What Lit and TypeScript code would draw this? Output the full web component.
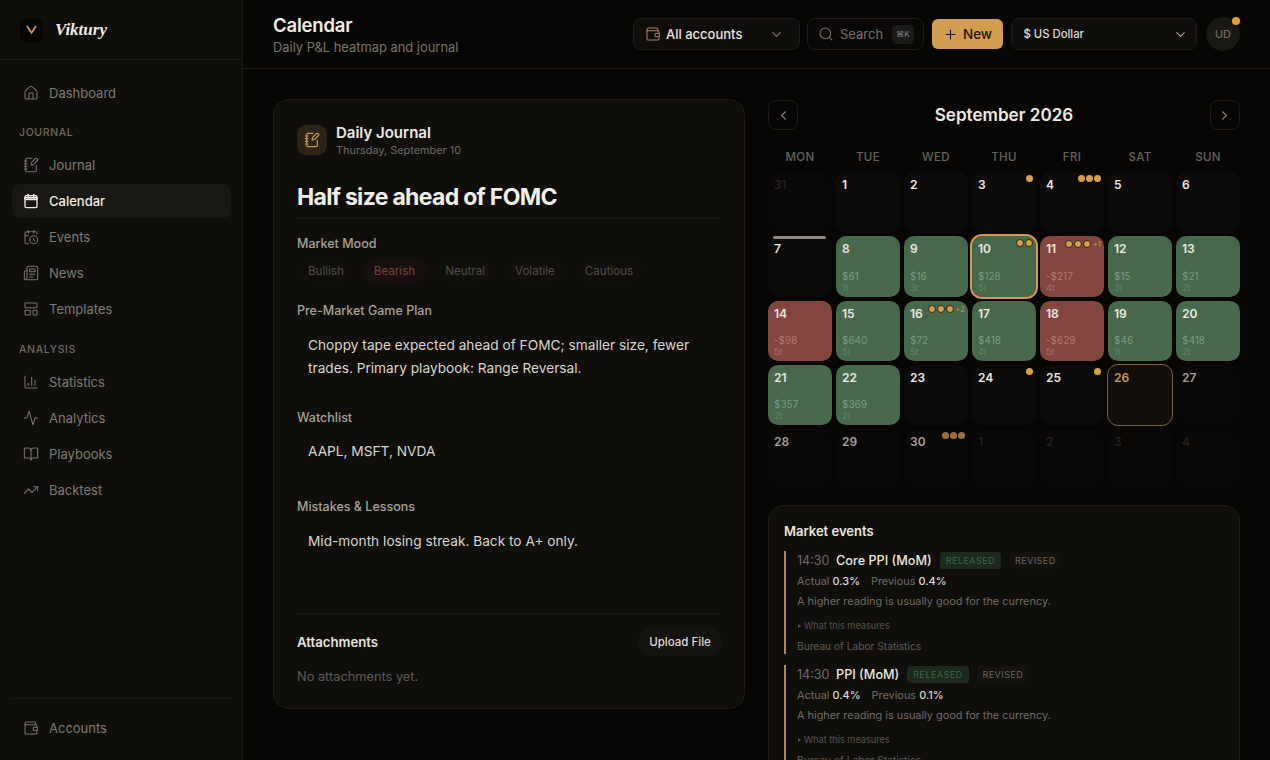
import { LitElement, html, css, svg } from "lit";
import { customElement } from "lit/decorators.js";

const I: Record<string, any> = {
  home: svg`<path d="M15 21v-8a1 1 0 0 0-1-1h-4a1 1 0 0 0-1 1v8"/><path d="M3 10a2 2 0 0 1 .709-1.528l7-5.999a2 2 0 0 1 2.582 0l7 5.999A2 2 0 0 1 21 10v9a2 2 0 0 1-2 2H5a2 2 0 0 1-2-2z"/>`,
  journal: svg`<path d="M13.4 2H6a2 2 0 0 0-2 2v16a2 2 0 0 0 2 2h12a2 2 0 0 0 2-2v-7.4"/><path d="M2 6h4"/><path d="M2 10h4"/><path d="M2 14h4"/><path d="M2 18h4"/><path d="M21.378 5.626a1 1 0 1 0-3.004-3.004l-5.01 5.012a2 2 0 0 0-.506.854l-.837 2.87a.5.5 0 0 0 .62.62l2.87-.837a2 2 0 0 0 .854-.506z"/>`,
  calendar: svg`<path d="M8 2v4"/><path d="M16 2v4"/><rect width="18" height="18" x="3" y="4" rx="2"/><path d="M3 10h18"/><path d="M3 7h18" stroke-width="3"/>`,
  events: svg`<path d="M21 7.5V6a2 2 0 0 0-2-2H5a2 2 0 0 0-2 2v14a2 2 0 0 0 2 2h3.5"/><path d="M16 2v4"/><path d="M8 2v4"/><path d="M3 10h5"/><path d="M17.5 17.5 16 16.3V14"/><circle cx="16" cy="16" r="6"/>`,
  news: svg`<path d="M4 22h16a2 2 0 0 0 2-2V4a2 2 0 0 0-2-2H8a2 2 0 0 0-2 2v16a2 2 0 0 1-2 2Zm0 0a2 2 0 0 1-2-2v-9c0-1.1.9-2 2-2h2"/><path d="M18 14h-8"/><path d="M15 18h-5"/><path d="M10 6h8v4h-8V6Z"/>`,
  templates: svg`<rect width="18" height="7" x="3" y="3" rx="1"/><rect width="8" height="7" x="3" y="14" rx="1"/><rect width="6" height="7" x="15" y="14" rx="1"/>`,
  stats: svg`<path d="M3 3v16a2 2 0 0 0 2 2h16"/><path d="M18 17V9"/><path d="M13 17V5"/><path d="M8 17v-3"/>`,
  activity: svg`<path d="M22 12h-2.48a2 2 0 0 0-1.93 1.46l-2.35 8.36a.25.25 0 0 1-.48 0L9.24 2.18a.25.25 0 0 0-.48 0l-2.35 8.36A2 2 0 0 1 4.49 12H2"/>`,
  book: svg`<path d="M12 7v14"/><path d="M3 18a1 1 0 0 1-1-1V4a1 1 0 0 1 1-1h5a4 4 0 0 1 4 4 4 4 0 0 1 4-4h5a1 1 0 0 1 1 1v13a1 1 0 0 1-1 1h-6a3 3 0 0 0-3 3 3 3 0 0 0-3-3z"/>`,
  trend: svg`<path d="M16 7h6v6"/><path d="m22 7-8.5 8.5-5-5L2 17"/>`,
  wallet: svg`<path d="M19 7V5a2 2 0 0 0-2-2H6a3 3 0 0 0-3 3v13a2 2 0 0 0 2 2h14a2 2 0 0 0 2-2v-3"/><path d="M3 7h16a2 2 0 0 1 2 2v2"/><rect x="15" y="11" width="7" height="5" rx="2.5"/>`,
  chev: svg`<path d="m6 9 6 6 6-6"/>`,
  left: svg`<path d="m15 18-6-6 6-6"/>`,
  right: svg`<path d="m9 18 6-6-6-6"/>`,
  search: svg`<circle cx="11" cy="11" r="8"/><path d="m21 21-4.3-4.3"/>`,
  plus: svg`<path d="M5 12h14"/><path d="M12 5v14"/>`,
};

const icon = (n: string, size = 16, sw = 1.75) => html`<svg class="ic" width=${size} height=${size} viewBox="0 0 24 24" fill="none" stroke="currentColor" stroke-width=${sw} stroke-linecap="round" stroke-linejoin="round">${I[n]}</svg>`;

type Cell = { n: number; kind?: string; amt?: string; tr?: string; dots?: number; more?: string; bar?: boolean; sel?: boolean };

const cells: Cell[] = [
  { n: 31, kind: "out" }, { n: 1 }, { n: 2 }, { n: 3, dots: 1 }, { n: 4, dots: 3 }, { n: 5 }, { n: 6 },
  { n: 7, bar: true }, { n: 8, kind: "g", amt: "$61", tr: "1t" }, { n: 9, kind: "g", amt: "$16", tr: "3t" },
  { n: 10, kind: "g", amt: "$128", tr: "5t", dots: 2, sel: true }, { n: 11, kind: "r", amt: "-$217", tr: "4t", dots: 3, more: "+1" },
  { n: 12, kind: "g", amt: "$15", tr: "3t" }, { n: 13, kind: "g", amt: "$21", tr: "2t" },
  { n: 14, kind: "r", amt: "-$98", tr: "5t" }, { n: 15, kind: "g", amt: "$640", tr: "5t" }, { n: 16, kind: "g", amt: "$72", tr: "5t", dots: 3, more: "+2" },
  { n: 17, kind: "g", amt: "$418", tr: "4t" }, { n: 18, kind: "r", amt: "-$629", tr: "5t" }, { n: 19, kind: "g", amt: "$46", tr: "1t" }, { n: 20, kind: "g", amt: "$418", tr: "2t" },
  { n: 21, kind: "g", amt: "$357", tr: "2t" }, { n: 22, kind: "g", amt: "$369", tr: "2t" }, { n: 23 }, { n: 24, dots: 1 }, { n: 25, dots: 1 }, { n: 26, kind: "today" }, { n: 27, kind: "fut" },
  { n: 28, kind: "fut" }, { n: 29, kind: "fut" }, { n: 30, kind: "fut", dots: 3 }, { n: 1, kind: "out" }, { n: 2, kind: "out" }, { n: 3, kind: "out" }, { n: 4, kind: "out" },
];

const evs = [
  { name: "Core PPI (MoM)", actual: "0.3%", prev: "0.4%" },
  { name: "PPI (MoM)", actual: "0.4%", prev: "0.1%" },
];

@customElement("app-root")
export class AppRoot extends LitElement {
  static styles = css`
    :host { display: block; width: 1270px; height: 760px; overflow: hidden; background: #080605; color: #f2efe8; font-family: Inter, "Liberation Sans", sans-serif; }
    * { box-sizing: border-box; }
    .ic { flex: none; display: block; }
    .app { display: flex; height: 760px; }
    .side { width: 243px; flex: none; background: #0f0e0b; border-right: 1px solid #1c1a16; display: flex; flex-direction: column; }
    .brand { height: 60px; flex: none; border-bottom: 1px solid #1c1a16; display: flex; align-items: center; gap: 12px; padding: 0 20px 0; }
    .logo { width: 23px; height: 24px; border-radius: 6px; background: #070605; display: flex; align-items: center; justify-content: center; }
    .brandname { font-family: "Liberation Serif", serif; font-style: italic; font-weight: 700; font-size: 17px; color: #efece4; }
    .nav { padding: 15px 11px 0 12px; display: flex; flex-direction: column; }
    .item { height: 36px; display: flex; align-items: center; gap: 10px; padding: 0 11px; font-size: 13px; color: #7f7a70; border-radius: 8px; }
    .item .ic { color: #77736a; }
    .item.on { background: #191713; color: #efece4; height: 34px; margin: 1px 0; font-weight: 500; }
    .item.on .ic { color: #efece4; }
    .sec { height: 17px; margin: 13px 0 6px; padding-left: 7px; font-size: 10.5px; font-weight: 500; letter-spacing: 0.06em; color: #6d695f; line-height: 17px; }
    .sec.b { margin: 14px 0 6px; }
    .foot { margin: auto 11px 0 12px; border-top: 1px solid #1c1a16; padding: 11px 0 14px; }
    .main { flex: 1; min-width: 0; display: flex; flex-direction: column; }
    .top { height: 69px; flex: none; border-bottom: 1px solid #1f1c18; display: flex; align-items: center; padding: 0 30px; }
    .ttl { flex: 1; padding-top: 1px; }
    .ttl h1 { margin: 0; font-size: 18.5px; font-weight: 600; line-height: 24px; letter-spacing: -0.01em; color: #f0ede6; }
    .ttl p { margin: 2px 0 0; font-size: 12.9px; line-height: 18px; color: #77736a; }
    .ctl { display: flex; align-items: center; gap: 7px; }
    .box { height: 32px; border: 1px solid #201d18; border-radius: 8px; background: #100e0b; display: flex; align-items: center; font-size: 13px; }
    .acc { width: 167px; padding: 0 15px 0 11px; gap: 5px; color: #e8e5dd; font-weight: 500; }
    .acc .ic:first-child { color: #b0805a; }
    .acc span { flex: 1; }
    .acc .ic:last-child { color: #7f7a70; }
    .search { width: 117px; padding: 0 9px 0 10px; gap: 6px; color: #77736a; background: #0a0807; }
    .search span { flex: 1; }
    .search kbd { font: inherit; font-size: 8px; width: 22px; height: 19px; border-radius: 4px; background: #1c1a16; display: flex; align-items: center; justify-content: center; color: #8a857c; }
    .new { width: 71px; height: 30px; margin-left: 1px; border-radius: 6px; background: #d29d50; color: #1a1408; display: flex; align-items: center; justify-content: center; gap: 5px; font-size: 13.5px; font-weight: 500; }
    .cur { width: 186px; margin-left: 1px; padding: 0 8px 0 11.5px; justify-content: space-between; font-size: 11.3px; font-weight: 500; color: #dedbd3; }
    .cur .ic { color: #b5a27e; }
    .av { width: 34px; height: 34px; margin-left: 2px; border-radius: 50%; background: #1a1815; color: #6f6b62; font-size: 11px; font-weight: 500; display: flex; align-items: center; justify-content: center; position: relative; }
    .av::after { content: ""; position: absolute; right: 0; top: 0; width: 8px; height: 8px; border-radius: 50%; background: #eb9e27; }
    .body { flex: 1; min-height: 0; display: flex; gap: 23px; padding: 30px 30px 0; overflow: hidden; align-items: flex-start; }
    .card { width: 472px; flex: none; height: 610px; background: #100e0b; border: 1px solid #1f1c18; border-radius: 16px; padding: 25px 23px 0; display: flex; flex-direction: column; }
    .jh { display: flex; align-items: center; gap: 9px; height: 30px; }
    .jic { width: 30px; height: 30px; border-radius: 9px; background: #2a2317; color: #c9974e; display: flex; align-items: center; justify-content: center; }
    .jh b { display: block; font-size: 15px; font-weight: 600; line-height: 17px; color: #ece9e1; }
    .jh small { display: block; margin-top: 2px; font-size: 10.9px; line-height: 14px; color: #6f6b62; }
    .big { margin: 25px 0 0; font-size: 23px; font-weight: 700; line-height: 34px; letter-spacing: -0.03em; color: #f2efe8; height: 39px; border-bottom: 1px solid #1d1b16; flex: none; }
    .lb { font-size: 12.5px; font-weight: 500; line-height: 16px; color: #a5a197; margin-top: 17px; }
    .chips { display: flex; gap: 8px; margin-top: 7px; }
    .chip { height: 24px; padding: 0 11px; border-radius: 12px; background: #110f0c; font-size: 11.6px; line-height: 24px; color: #4f4c45; }
    .chip.on { background: #18100e; color: #74403a; }
    .lb.p { margin-top: 20px; }
    .txt { padding: 0 11px; font-size: 13.7px; line-height: 23px; color: #d8d5cd; }
    .txt.t1 { margin-top: 15px; height: 46px; }
    .lb.w { margin-top: 30px; }
    .txt.t2 { margin-top: 14px; height: 23px; }
    .lb.m { margin-top: 36px; }
    .txt.t3 { margin-top: 15px; height: 23px; }
    .att { margin-top: 60px; border-top: 1px solid #1b1915; padding-top: 13px; display: flex; align-items: center; justify-content: space-between; }
    .att b { font-size: 13.2px; font-weight: 600; color: #e6e3db; }
    .up { width: 84px; height: 29px; margin-right: -1px; border-radius: 15px; background: #151310; font-size: 11.5px; font-weight: 500; color: #dedbd3; display: flex; align-items: center; justify-content: center; }
    .none { margin-top: 12px; font-size: 12.8px; line-height: 18px; color: #5f5c54; }
    .right { width: 472px; flex: none; }
    .cn { display: flex; align-items: center; justify-content: space-between; height: 30px; margin-top: 1px; }
    .nb { width: 30px; height: 30px; border: 1px solid #1f1c18; border-radius: 8px; display: flex; align-items: center; justify-content: center; color: #8a857c; }
    .cn h2 { margin: 0 0 1px; font-size: 17.1px; font-weight: 600; color: #ece9e1; }
    .wk, .grid { display: grid; grid-template-columns: repeat(7, 64px); column-gap: 4px; }
    .wk { margin-top: 16.5px; height: 20px; line-height: 20px; text-align: center; font-size: 11.5px; font-weight: 500; letter-spacing: 0.03em; color: #66625a; }
    .grid { margin-top: 5.5px; row-gap: 3.8px; grid-auto-rows: 60.5px; }
    .c { position: relative; border-radius: 10px; background: #0d0b09; padding: 5px 6px 4px; display: flex; flex-direction: column; }
    .n { font-size: 12px; font-weight: 600; line-height: 16px; color: #ece9e1; }
    .amt { margin-top: auto; font-size: 10px; line-height: 12px; color: #7a9d80; }
    .tr { font-size: 9px; line-height: 11px; color: #628568; }
    .c.g { background: #47684b; }
    .c.r { background: #83463e; }
    .c.r .amt { color: #b27a70; }
    .c.r .tr { color: #a9716a; }
    .c.out { background: #0a0807; }
    .c.out .n { color: #26241f; font-weight: 500; }
    .c.fut { background: #0a0807; }
    .c.fut .n { color: #a3a097; }
    .c.today { background: #110e0b; outline: 1px solid #7a5f38; }
    .c.today .n { color: #c9974e; }
    .c.sel { outline: 2px solid #d29d50; box-shadow: 0 0 0 1px #000; }
    .bar { position: absolute; left: 5px; right: 6px; top: 0; height: 3px; background: #8a8680; border-radius: 2px; }
    .dots { position: absolute; top: 3px; right: 3px; display: flex; align-items: center; gap: 1px; font-size: 8px; color: #b58f58; }
    .d { width: 7px; height: 7px; border-radius: 50%; background: #d7a04f; }
    .c.g .d, .c.r .d { width: 8px; height: 8px; border: 1px solid #2a2a1a; }
    .c.fut .dots { opacity: .7; }
    .mk { margin-top: 15px; height: 400px; background: #100e0b; border: 1px solid #1f1c18; border-radius: 16px; padding: 15px 15px 0; }
    .mk h3 { margin: 0 0 10px; font-size: 13px; font-weight: 600; line-height: 20px; color: #e9e6de; }
    .ev { border-left: 2px solid #b08558; padding-left: 11px; margin-bottom: 11px; height: 103px; font-size: 10.9px; color: #6f6b62; }
    .r1 { display: flex; align-items: center; height: 20px; }
    .t { font-size: 12.5px; color: #6f6b62; width: 39px; }
    .nm { font-size: 12.7px; font-weight: 500; color: #e9e6de; margin-right: 8px; }
    .bd { height: 17px; padding: 0 6px; border-radius: 3px; background: #1b2a1c; color: #3f6647; font-size: 9px; line-height: 17px; letter-spacing: 0.05em; }
    .bd.x { background: #14120f; color: #6a665d; margin-left: 9px; padding: 0 5px; }
    .r2 { display: flex; gap: 11px; height: 16px; margin-top: 2px; line-height: 16px; }
    .r2 b { font-weight: 500; color: #dcd9d1; }
    .r3 { height: 16px; line-height: 16px; margin-top: 4px; }
    .r4 { height: 14px; line-height: 14px; margin-top: 10px; font-size: 9.2px; color: #56534c; display: flex; align-items: center; gap: 3px; }
    .r4 i { width: 0; height: 0; border-left: 3px solid #56534c; border-top: 2.5px solid transparent; border-bottom: 2.5px solid transparent; margin-left: 1px; }
    .r5 { height: 14px; line-height: 14px; margin-top: 6px; font-size: 10.2px; color: #5f5c54; }
  `;

  private item(ic: string, label: string, on = false) {
    return html`<div class="item ${on ? "on" : ""}">${icon(ic, 16, on ? 2 : 1.6)}<span>${label}</span></div>`;
  }

  render() {
    return html`<div class="app">
      <aside class="side">
        <div class="brand">
          <div class="logo"><svg width="11" height="9" viewBox="0 0 11 9"><path d="M1 1l4.5 7L10 1" fill="none" stroke="#d29a5a" stroke-width="1.6"/></svg></div>
          <span class="brandname">Viktury</span>
        </div>
        <nav class="nav">
          ${this.item("home", "Dashboard")}
          <div class="sec">JOURNAL</div>
          ${this.item("journal", "Journal")}
          ${this.item("calendar", "Calendar", true)}
          ${this.item("events", "Events")}
          ${this.item("news", "News")}
          ${this.item("templates", "Templates")}
          <div class="sec b">ANALYSIS</div>
          ${this.item("stats", "Statistics")}
          ${this.item("activity", "Analytics")}
          ${this.item("book", "Playbooks")}
          ${this.item("trend", "Backtest")}
        </nav>
        <div class="foot">${this.item("wallet", "Accounts")}</div>
      </aside>
      <div class="main">
        <header class="top">
          <div class="ttl"><h1>Calendar</h1><p>Daily P&amp;L heatmap and journal</p></div>
          <div class="ctl">
            <div class="box acc">${icon("wallet", 16, 1.6)}<span>All accounts</span>${icon("chev", 15, 1.75)}</div>
            <div class="box search">${icon("search", 16, 1.6)}<span>Search</span><kbd>⌘K</kbd></div>
            <div class="new">${icon("plus", 15, 1.75)}<span>New</span></div>
            <div class="box cur"><span>$ US Dollar</span>${icon("chev", 15, 1.75)}</div>
            <div class="av">UD</div>
          </div>
        </header>
        <div class="body">
          <section class="card">
            <div class="jh"><div class="jic">${icon("journal", 16, 1.75)}</div><div><b>Daily Journal</b><small>Thursday, September 10</small></div></div>
            <h2 class="big">Half size ahead of FOMC</h2>
            <div class="lb">Market Mood</div>
            <div class="chips">
              <span class="chip">Bullish</span><span class="chip on">Bearish</span><span class="chip">Neutral</span><span class="chip">Volatile</span><span class="chip">Cautious</span>
            </div>
            <div class="lb p">Pre-Market Game Plan</div>
            <div class="txt t1">Choppy tape expected ahead of FOMC; smaller size, fewer trades. Primary playbook: Range Reversal.</div>
            <div class="lb w">Watchlist</div>
            <div class="txt t2">AAPL, MSFT, NVDA</div>
            <div class="lb m">Mistakes &amp; Lessons</div>
            <div class="txt t3">Mid-month losing streak. Back to A+ only.</div>
            <div class="att"><b>Attachments</b><div class="up">Upload File</div></div>
            <div class="none">No attachments yet.</div>
          </section>
          <section class="right">
            <div class="cn"><div class="nb">${icon("left", 15)}</div><h2>September 2026</h2><div class="nb">${icon("right", 15)}</div></div>
            <div class="wk">${["MON", "TUE", "WED", "THU", "FRI", "SAT", "SUN"].map((d) => html`<div>${d}</div>`)}</div>
            <div class="grid">${cells.map((c) => html`<div class="c ${c.kind ?? ""} ${c.sel ? "sel" : ""}">
              ${c.bar ? html`<div class="bar"></div>` : ""}
              <div class="n">${c.n}</div>
              ${c.dots ? html`<div class="dots">${Array.from({ length: c.dots }, () => html`<span class="d"></span>`)}${c.more ? html`<span>${c.more}</span>` : ""}</div>` : ""}
              ${c.amt ? html`<div class="amt">${c.amt}</div><div class="tr">${c.tr}</div>` : ""}
            </div>`)}</div>
            <div class="mk">
              <h3>Market events</h3>
              ${evs.map((e) => html`<div class="ev">
                <div class="r1"><span class="t">14:30</span><span class="nm">${e.name}</span><span class="bd">RELEASED</span><span class="bd x">REVISED</span></div>
                <div class="r2"><span>Actual <b>${e.actual}</b></span><span>Previous <b>${e.prev}</b></span></div>
                <div class="r3">A higher reading is usually good for the currency.</div>
                <div class="r4"><i></i><span>What this measures</span></div>
                <div class="r5">Bureau of Labor Statistics</div>
              </div>`)}
            </div>
          </section>
        </div>
      </div>
    </div>`;
  }
}
